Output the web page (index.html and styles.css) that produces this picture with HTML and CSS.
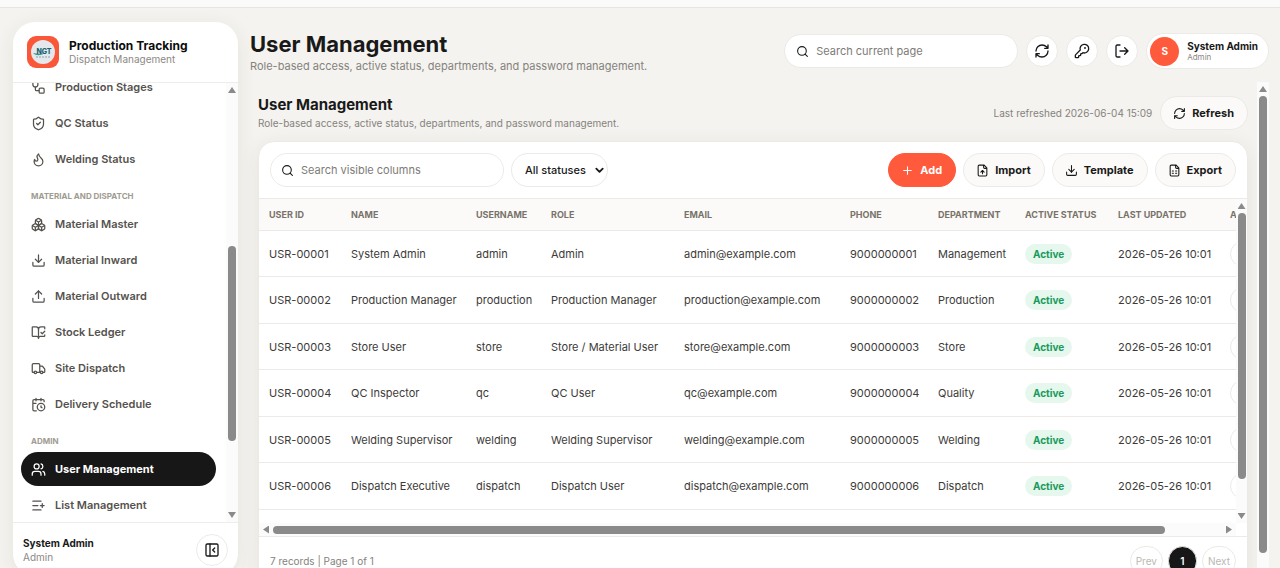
FILE: index.html
```
<!DOCTYPE html>
<html lang="en">
<head>
    <meta charset="UTF-8">
    <meta name="viewport" content="width=device-width, initial-scale=1.0">
    <title>Production Tracking - User Management</title>
    <link rel="stylesheet" href="styles.css">
</head>
<body>
    <svg class="sprite" aria-hidden="true">
        <symbol id="i-stages" viewBox="0 0 24 24"><rect width="8" height="8" x="13" y="13" rx="2"/><path d="M3 3v4a4 4 0 0 0 8 0V3M7 11v4a2 2 0 0 0 2 2h4"/></symbol>
        <symbol id="i-shield" viewBox="0 0 24 24"><path d="M20 13c0 5-3.5 7.5-7.66 8.95a1 1 0 0 1-.67-.01C7.5 20.5 4 18 4 13V6a1 1 0 0 1 1-1c2 0 4.5-1.2 6.24-2.72a1.17 1.17 0 0 1 1.52 0C14.51 3.81 17 5 19 5a1 1 0 0 1 1 1z"/><path d="m9 12 2 2 4-4"/></symbol>
        <symbol id="i-flame" viewBox="0 0 24 24"><path d="M8.5 14.5A2.5 2.5 0 0 0 11 12c0-1.38-.5-2-1-3-1.072-2.143-.224-4.054 2-6 .5 2.5 2 4.9 4 6.5 2 1.6 3 3.5 3 5.5a7 7 0 1 1-14 0c0-1.153.433-2.294 1-3a2.5 2.5 0 0 0 2.5 2.5z"/></symbol>
        <symbol id="i-boxes" viewBox="0 0 24 24"><path d="M2.97 12.92A2 2 0 0 0 2 14.63v3.24a2 2 0 0 0 .97 1.71l3 1.8a2 2 0 0 0 2.06 0L12 19v-5.5l-5-3-4.03 2.42Z"/><path d="m7 16.5-4.74-2.85M7 16.5l5-3M7 16.5v5.17"/><path d="M12 13.5V19l3.97 2.38a2 2 0 0 0 2.06 0l3-1.8a2 2 0 0 0 .97-1.71v-3.24a2 2 0 0 0-.97-1.71L17 10.5l-5 3Z"/><path d="m17 16.5-5-3M17 16.5l4.74-2.85M17 16.5v5.17"/><path d="M7.97 4.42A2 2 0 0 0 7 6.13v4.37l5 3 5-3V6.13a2 2 0 0 0-.97-1.71l-3-1.8a2 2 0 0 0-2.06 0l-3 1.8Z"/><path d="M12 8 7.26 5.15M12 8l4.74-2.85M12 13.5V8"/></symbol>
        <symbol id="i-download" viewBox="0 0 24 24"><path d="M12 15V3M21 15v4a2 2 0 0 1-2 2H5a2 2 0 0 1-2-2v-4"/><path d="m7 10 5 5 5-5"/></symbol>
        <symbol id="i-upload" viewBox="0 0 24 24"><path d="M12 3v12M21 15v4a2 2 0 0 1-2 2H5a2 2 0 0 1-2-2v-4"/><path d="m17 8-5-5-5 5"/></symbol>
        <symbol id="i-book" viewBox="0 0 24 24"><path d="M12 21V7M16 12l2 2 4-4"/><path d="M22 6V4a1 1 0 0 0-1-1h-5a4 4 0 0 0-4 4 4 4 0 0 0-4-4H3a1 1 0 0 0-1 1v13a1 1 0 0 0 1 1h6a3 3 0 0 1 3 3 3 3 0 0 1 3-3h6a1 1 0 0 0 1-1v-1.3"/></symbol>
        <symbol id="i-truck" viewBox="0 0 24 24"><path d="M14 18V6a2 2 0 0 0-2-2H4a2 2 0 0 0-2 2v11a1 1 0 0 0 1 1h2M15 18H9M19 18h2a1 1 0 0 0 1-1v-3.65a1 1 0 0 0-.22-.624l-3.48-4.35A1 1 0 0 0 17.52 8H14"/><circle cx="17" cy="18" r="2"/><circle cx="7" cy="18" r="2"/></symbol>
        <symbol id="i-calendar" viewBox="0 0 24 24"><path d="M16 14v2.2l1.6 1M16 2v4M21 7.5V6a2 2 0 0 0-2-2H5a2 2 0 0 0-2 2v14a2 2 0 0 0 2 2h3.5M3 10h5M8 2v4"/><circle cx="16" cy="16" r="6"/></symbol>
        <symbol id="i-users" viewBox="0 0 24 24"><path d="M16 21v-2a4 4 0 0 0-4-4H6a4 4 0 0 0-4 4v2M16 3.128a4 4 0 0 1 0 7.744M22 21v-2a4 4 0 0 0-3-3.87"/><circle cx="9" cy="7" r="4"/></symbol>
        <symbol id="i-list" viewBox="0 0 24 24"><path d="M16 5H3M11 12H3M16 19H3M18 9v6M21 12h-6"/></symbol>
        <symbol id="i-panel" viewBox="0 0 24 24"><rect width="18" height="18" x="3" y="3" rx="2"/><path d="M9 3v18M16 15l-3-3 3-3"/></symbol>
        <symbol id="i-search" viewBox="0 0 24 24"><circle cx="11" cy="11" r="8"/><path d="m21 21-4.3-4.3"/></symbol>
        <symbol id="i-refresh" viewBox="0 0 24 24"><path d="M3 12a9 9 0 0 1 9-9 9.75 9.75 0 0 1 6.74 2.74L21 8M21 3v5h-5M21 12a9 9 0 0 1-9 9 9.75 9.75 0 0 1-6.74-2.74L3 16M8 16H3v5"/></symbol>
        <symbol id="i-key" viewBox="0 0 24 24"><path d="M2.586 17.414A2 2 0 0 0 2 18.828V21a1 1 0 0 0 1 1h3a1 1 0 0 0 1-1v-1a1 1 0 0 1 1-1h1a1 1 0 0 0 1-1v-1a1 1 0 0 1 1-1h.172a2 2 0 0 0 1.414-.586l.814-.814a6.5 6.5 0 1 0-4-4z"/><circle cx="16.5" cy="7.5" r=".5"/></symbol>
        <symbol id="i-logout" viewBox="0 0 24 24"><path d="m16 17 5-5-5-5M21 12H9M9 21H5a2 2 0 0 1-2-2V5a2 2 0 0 1 2-2h4"/></symbol>
        <symbol id="i-plus" viewBox="0 0 24 24"><path d="M5 12h14M12 5v14"/></symbol>
        <symbol id="i-file-up" viewBox="0 0 24 24"><path d="M15 2H6a2 2 0 0 0-2 2v16a2 2 0 0 0 2 2h12a2 2 0 0 0 2-2V7zM14 2v4a2 2 0 0 0 2 2h4M12 12v6"/><path d="m15 15-3-3-3 3"/></symbol>
        <symbol id="i-sheet" viewBox="0 0 24 24"><path d="M15 2H6a2 2 0 0 0-2 2v16a2 2 0 0 0 2 2h12a2 2 0 0 0 2-2V7zM14 2v4a2 2 0 0 0 2 2h4M8 13h2M14 13h2M8 17h2M14 17h2"/></symbol>
        <symbol id="i-chevron" viewBox="0 0 24 24"><path d="m5 8 7 7 7-7"/></symbol>
    </svg>

    <div class="top-strip"></div>
    <div class="layout">
        <aside class="sidebar">
            <div class="brand">
                <svg class="logo" viewBox="0 0 32 32" aria-hidden="true">
                    <rect width="32" height="32" rx="9" fill="#fa5638"/>
                    <circle cx="16" cy="16" r="12" fill="#e4e8ec"/>
                    <path d="M6 17c3 3 7 3 12 0-4 1-8 1-12 0z" fill="#2d9a8d"/>
                    <text x="17" y="18" class="logo-text">NGT</text>
                    <path d="M9 21h14" stroke="#8ba3ad" stroke-dasharray="2 1"/>
                </svg>
                <div>
                    <strong class="brand-name">Production Tracking</strong>
                    <span class="muted">Dispatch Management</span>
                </div>
            </div>
            <div class="nav-wrap">
                <nav class="nav">
                    <a href="#stages"><svg class="icon"><use href="#i-stages"/></svg>Production Stages</a>
                    <a href="#qc"><svg class="icon"><use href="#i-shield"/></svg>QC Status</a>
                    <a href="#welding"><svg class="icon"><use href="#i-flame"/></svg>Welding Status</a>
                    <h2>Material and Dispatch</h2>
                    <a href="#material"><svg class="icon"><use href="#i-boxes"/></svg>Material Master</a>
                    <a href="#inward"><svg class="icon"><use href="#i-download"/></svg>Material Inward</a>
                    <a href="#outward"><svg class="icon"><use href="#i-upload"/></svg>Material Outward</a>
                    <a href="#ledger"><svg class="icon"><use href="#i-book"/></svg>Stock Ledger</a>
                    <a href="#dispatch"><svg class="icon"><use href="#i-truck"/></svg>Site Dispatch</a>
                    <a href="#delivery"><svg class="icon"><use href="#i-calendar"/></svg>Delivery Schedule</a>
                    <h2>Admin</h2>
                    <a href="#users" class="active"><svg class="icon"><use href="#i-users"/></svg>User Management</a>
                    <a href="#lists"><svg class="icon"><use href="#i-list"/></svg>List Management</a>
                </nav>
                <div class="scrollbar nav-scroll">
                    <i class="arrow up"></i><div class="track"><div class="thumb"></div></div><i class="arrow down"></i>
                </div>
            </div>
            <div class="side-foot">
                <div>
                    <strong>System Admin</strong>
                    <span class="muted">Admin</span>
                </div>
                <button class="round-btn" aria-label="Collapse sidebar"><svg class="icon"><use href="#i-panel"/></svg></button>
            </div>
        </aside>

        <main class="main">
            <header class="topbar">
                <div class="titles">
                    <h1>User Management</h1>
                    <p>Role-based access, active status, departments, and password management.</p>
                </div>
                <label class="search"><svg class="icon small"><use href="#i-search"/></svg><input type="text" placeholder="Search current page" aria-label="Search current page"></label>
                <button class="round-btn" aria-label="Reload"><svg class="icon"><use href="#i-refresh"/></svg></button>
                <button class="round-btn" aria-label="Change password"><svg class="icon"><use href="#i-key"/></svg></button>
                <button class="round-btn" aria-label="Sign out"><svg class="icon"><use href="#i-logout"/></svg></button>
                <div class="user-chip">
                    <span class="avatar">S</span>
                    <div>
                        <strong>System Admin</strong>
                        <span class="muted">Admin</span>
                    </div>
                </div>
            </header>

            <div class="content-wrap">
                <section class="content">
                    <div class="page-head">
                        <div class="titles">
                            <h2>User Management</h2>
                            <p>Role-based access, active status, departments, and password management.</p>
                        </div>
                        <span class="refreshed">Last refreshed 2026-06-04 15:09</span>
                        <button class="btn"><svg class="icon small"><use href="#i-refresh"/></svg>Refresh</button>
                    </div>

                    <div class="card">
                        <div class="toolbar">
                            <label class="search"><svg class="icon small"><use href="#i-search"/></svg><input type="text" placeholder="Search visible columns" aria-label="Search visible columns"></label>
                            <div class="select">
                                <select aria-label="Status"><option>All statuses</option><option>Active</option><option>Inactive</option></select>
                                <svg class="icon"><use href="#i-chevron"/></svg>
                            </div>
                            <div class="actions">
                                <button class="btn primary"><svg class="icon small"><use href="#i-plus"/></svg>Add</button>
                                <button class="btn"><svg class="icon small"><use href="#i-file-up"/></svg>Import</button>
                                <button class="btn"><svg class="icon small"><use href="#i-download"/></svg>Template</button>
                                <button class="btn"><svg class="icon small"><use href="#i-sheet"/></svg>Export</button>
                            </div>
                        </div>

                        <div class="table-area">
                            <div class="table-scroll">
                                <table>
                                    <colgroup>
                                        <col class="col-id"><col class="col-name"><col class="col-username"><col class="col-role"><col class="col-email"><col class="col-phone"><col class="col-dept"><col class="col-status"><col class="col-updated"><col class="col-actions">
                                    </colgroup>
                                    <thead>
                                        <tr><th>User ID</th><th>Name</th><th>Username</th><th>Role</th><th>Email</th><th>Phone</th><th>Department</th><th>Active Status</th><th>Last Updated</th><th>Actions</th></tr>
                                    </thead>
                                    <tbody>
                                        <tr><td>USR-00001</td><td>System Admin</td><td>admin</td><td>Admin</td><td>admin@example.com</td><td>9000000001</td><td>Management</td><td><span class="badge">Active</span></td><td>2026-05-26 10:01</td><td><button class="row-btn" aria-label="Edit"></button></td></tr>
                                        <tr><td>USR-00002</td><td>Production Manager</td><td>production</td><td>Production Manager</td><td>production@example.com</td><td>9000000002</td><td>Production</td><td><span class="badge">Active</span></td><td>2026-05-26 10:01</td><td><button class="row-btn" aria-label="Edit"></button></td></tr>
                                        <tr><td>USR-00003</td><td>Store User</td><td>store</td><td>Store / Material User</td><td>store@example.com</td><td>9000000003</td><td>Store</td><td><span class="badge">Active</span></td><td>2026-05-26 10:01</td><td><button class="row-btn" aria-label="Edit"></button></td></tr>
                                        <tr><td>USR-00004</td><td>QC Inspector</td><td>qc</td><td>QC User</td><td>qc@example.com</td><td>9000000004</td><td>Quality</td><td><span class="badge">Active</span></td><td>2026-05-26 10:01</td><td><button class="row-btn" aria-label="Edit"></button></td></tr>
                                        <tr><td>USR-00005</td><td>Welding Supervisor</td><td>welding</td><td>Welding Supervisor</td><td>welding@example.com</td><td>9000000005</td><td>Welding</td><td><span class="badge">Active</span></td><td>2026-05-26 10:01</td><td><button class="row-btn" aria-label="Edit"></button></td></tr>
                                        <tr><td>USR-00006</td><td>Dispatch Executive</td><td>dispatch</td><td>Dispatch User</td><td>dispatch@example.com</td><td>9000000006</td><td>Dispatch</td><td><span class="badge">Active</span></td><td>2026-05-26 10:01</td><td><button class="row-btn" aria-label="Edit"></button></td></tr>
                                    </tbody>
                                </table>
                            </div>
                            <div class="scrollbar table-scroll-y">
                                <i class="arrow up"></i><div class="track"><div class="thumb"></div></div><i class="arrow down"></i>
                            </div>
                            <div class="scrollbar horizontal">
                                <i class="arrow left"></i><div class="track"><div class="thumb"></div></div><i class="arrow right"></i>
                            </div>
                        </div>

                        <div class="pager">
                            <span>7 records | Page 1 of 1</span>
                            <button disabled>Prev</button>
                            <button class="current">1</button>
                            <button disabled>Next</button>
                        </div>
                    </div>
                </section>
                <div class="scrollbar page-scroll">
                    <i class="arrow up"></i><div class="track"><div class="thumb"></div></div>
                </div>
            </div>
        </main>
    </div>
</body>
</html>
```
FILE: styles.css
```
* {
    margin: 0;
    padding: 0;
    box-sizing: border-box;
}
body {
    font-family: Inter, sans-serif;
    font-size: 11px;
    line-height: 14px;
    background-color: #f4f3ef;
    color: #191919;
    height: 100vh;
    overflow: hidden;
}
button, input, select {
    font: inherit;
    color: inherit;
}
button {
    cursor: pointer;
}
.sprite {
    display: none;
}
.icon {
    width: 16px;
    height: 16px;
    flex-shrink: 0;
    fill: none;
    stroke: currentColor;
    stroke-width: 2;
    stroke-linecap: round;
    stroke-linejoin: round;
}
.icon.small {
    width: 13px;
    height: 13px;
}
.muted {
    display: block;
    color: #8b8984;
}
.top-strip {
    height: 8px;
    background: #fafafa;
    border-bottom: 1px solid #e6e5e1;
}
.layout {
    display: flex;
    gap: 12px;
    height: calc(100vh + 14px);
    padding: 14px 11px 14px 13px;
}

/* sidebar */
.sidebar {
    display: flex;
    flex-direction: column;
    width: 225px;
    flex-shrink: 0;
    background: #fff;
    border-radius: 22px;
    box-shadow: 0 4px 20px rgba(60, 50, 30, 0.08);
    overflow: hidden;
}
.brand {
    display: flex;
    align-items: center;
    gap: 10px;
    height: 61px;
    padding: 0 14px;
    border-bottom: 1px solid #eeedea;
    font-size: 10px;
    line-height: 13px;
}
.brand-name {
    display: block;
    font-size: 12px;
    line-height: 14px;
    color: #0c0c0c;
}
.logo {
    width: 32px;
    height: 32px;
}
.logo-text {
    font-size: 7px;
    font-weight: 800;
    text-anchor: middle;
    fill: #17626f;
}
.nav-wrap {
    display: flex;
    flex: 1;
    min-height: 0;
}
.nav {
    display: flex;
    flex-direction: column;
    justify-content: flex-end;
    gap: 2px;
    flex: 1;
    padding: 0 10px 0 8px;
    overflow: hidden;
}
.nav a {
    display: flex;
    align-items: center;
    gap: 9px;
    height: 34px;
    flex-shrink: 0;
    padding: 0 10px;
    border-radius: 17px;
    color: #55524e;
    font-weight: 600;
    text-decoration: none;
}
.nav .icon {
    width: 15px;
    height: 15px;
}
.nav a.active {
    background: #171717;
    color: #fff;
    font-weight: 700;
}
.nav h2 {
    padding: 12px 10px 3px;
    font-size: 8px;
    line-height: 12px;
    text-transform: uppercase;
    color: #a09b90;
}
.side-foot {
    display: flex;
    align-items: center;
    justify-content: space-between;
    height: 54px;
    padding: 0 10px;
    border-top: 1px solid #eeedea;
    font-size: 10px;
}

/* buttons and inputs */
.round-btn {
    display: flex;
    align-items: center;
    justify-content: center;
    width: 32px;
    height: 32px;
    flex-shrink: 0;
    background: #fff;
    border: 1px solid #eceae6;
    border-radius: 50%;
}
.btn {
    display: flex;
    align-items: center;
    gap: 6px;
    height: 34px;
    padding: 0 13px 0 12px;
    background: #fbfaf8;
    border: 1px solid #eceae6;
    border-radius: 17px;
    font-weight: 700;
}
.btn.primary {
    background: #ff5a3c;
    border-color: #ff5a3c;
    color: #fff;
}
.search {
    display: flex;
    align-items: center;
    gap: 7px;
    width: 234px;
    height: 34px;
    padding: 0 11px;
    background: #fff;
    border: 1px solid #eceae6;
    border-radius: 17px;
}
.search input {
    flex: 1;
    min-width: 0;
    background: none;
    border: none;
    outline: none;
}
.search input::placeholder {
    color: #7d7b77;
}
.select {
    display: flex;
    align-items: center;
    height: 34px;
    padding-right: 2px;
    border: 1px solid #eceae6;
    border-radius: 17px;
}
.select select {
    appearance: none;
    width: 82px;
    padding-left: 13px;
    background: none;
    border: none;
    outline: none;
    font-weight: 500;
}
.select .icon {
    width: 11px;
    height: 11px;
    stroke-width: 4;
}

/* main column */
.main {
    display: flex;
    flex-direction: column;
    flex: 1;
    min-width: 0;
}
.topbar {
    display: flex;
    align-items: center;
    gap: 8px;
    height: 60px;
    padding-bottom: 2px;
}
.titles {
    flex: 1;
}
.titles p {
    color: #85827d;
}
h1 {
    font-size: 22px;
    line-height: 30px;
}
.user-chip {
    display: flex;
    align-items: center;
    gap: 8px;
    height: 36px;
    padding: 0 10px 0 3px;
    background: #fff;
    border: 1px solid #eceae6;
    border-radius: 18px;
    font-size: 10px;
    line-height: 12px;
}
.user-chip .muted {
    font-size: 8px;
    line-height: 10px;
}
.avatar {
    display: flex;
    align-items: center;
    justify-content: center;
    width: 29px;
    height: 29px;
    border-radius: 50%;
    background: #ff5a3c;
    color: #fff;
    font-weight: 700;
}
.content-wrap {
    display: flex;
    flex: 1;
    gap: 9px;
    min-height: 0;
}
.content {
    flex: 1;
    min-width: 0;
    padding: 13px 0 0 8px;
}
.page-head {
    display: flex;
    align-items: center;
    gap: 8px;
    margin-bottom: 10px;
    color: #85827d;
}
.page-head h2 {
    font-size: 15px;
    line-height: 20px;
    color: #191919;
}
.page-head p {
    font-size: 10px;
    line-height: 16px;
}
.page-head .btn {
    color: #191919;
}
.refreshed {
    font-size: 10px;
}
.card {
    background: #fff;
    border: 1px solid #eceae6;
    border-radius: 16px;
    box-shadow: 0 4px 20px rgba(60, 50, 30, 0.08);
    overflow: hidden;
}
.toolbar {
    display: flex;
    align-items: center;
    gap: 7px;
    padding: 11px;
}
.toolbar .search {
    padding: 0 10px;
}
.actions {
    display: flex;
    gap: 7px;
    margin-left: auto;
}

/* table */
.table-area {
    display: grid;
    grid-template-columns: minmax(0, 1fr) 11px;
    grid-template-rows: 324px 13px;
    border-top: 1px solid #eceae6;
    border-bottom: 1px solid #eceae6;
}
.table-scroll {
    grid-area: 1 / 1;
    overflow: hidden;
}
table {
    width: 1041px;
    table-layout: fixed;
    border-collapse: separate;
    border-spacing: 0;
}
.col-id {
    width: 82px;
}
.col-name {
    width: 125px;
}
.col-username {
    width: 75px;
}
.col-role {
    width: 133px;
}
.col-email {
    width: 166px;
}
.col-phone {
    width: 88px;
}
.col-dept {
    width: 87px;
}
.col-status {
    width: 93px;
}
.col-updated {
    width: 112px;
}
.col-actions {
    width: 80px;
}
th, td {
    padding: 0 9px 0 10px;
    border-bottom: 1px solid #eceae6;
    text-align: left;
    white-space: nowrap;
}
th {
    height: 32px;
    background: #fcfaf8;
    color: #78736a;
    font-size: 9px;
    font-weight: 700;
    text-transform: uppercase;
}
td {
    height: 46px;
    color: #3c3b39;
}
tr:nth-child(even) td {
    height: 47px;
}
.badge {
    display: inline-block;
    padding: 3px 8px;
    border-radius: 10px;
    background: #e6f7ee;
    color: #199a5b;
    font-size: 10px;
    font-weight: 700;
}
.row-btn {
    display: block;
    width: 60px;
    height: 26px;
    background: #fff;
    border: 1px solid #eceae6;
    border-radius: 13px;
}
.pager {
    display: flex;
    align-items: center;
    gap: 5px;
    padding: 9px 11px;
    color: #85827d;
    font-size: 10px;
}
.pager span {
    margin-right: auto;
}
.pager button {
    height: 30px;
    min-width: 29px;
    padding: 0 5px;
    background: #fff;
    border: 1px solid #eceae6;
    border-radius: 15px;
    color: #bab8b4;
}
.pager .current {
    background: #171717;
    color: #fff;
    font-weight: 600;
}

/* scrollbars */
.scrollbar {
    display: flex;
    flex-direction: column;
    align-items: center;
    gap: 4px;
    width: 12px;
    padding: 4px 0;
    background: #fbfbfc;
}
.track {
    display: flex;
    flex-direction: column;
    flex: 1;
    width: 8px;
}
.thumb {
    background: #8a8a8a;
    border-radius: 4px;
}
.arrow {
    width: 8px;
    height: 6px;
    background: #8a8a8a;
    clip-path: polygon(50% 0, 100% 100%, 0 100%);
}
.arrow.down {
    clip-path: polygon(0 0, 100% 0, 50% 100%);
}
.nav-scroll .track {
    justify-content: flex-end;
    padding-bottom: 67px;
}
.nav-scroll .thumb {
    height: 195px;
}
.table-scroll-y {
    grid-area: 1 / 2;
    width: 11px;
}
.table-scroll-y .thumb {
    height: 90%;
}
.page-scroll .thumb {
    height: 457px;
}
.horizontal {
    grid-area: 2 / 1;
    flex-direction: row;
    width: auto;
    padding: 0 4px;
}
.horizontal .track {
    height: 8px;
    width: auto;
}
.horizontal .thumb {
    height: 8px;
    width: 94%;
}
.arrow.left, .arrow.right {
    width: 6px;
    height: 8px;
    clip-path: polygon(0 50%, 100% 0, 100% 100%);
}
.arrow.right {
    clip-path: polygon(0 0, 100% 50%, 0 100%);
}
```
